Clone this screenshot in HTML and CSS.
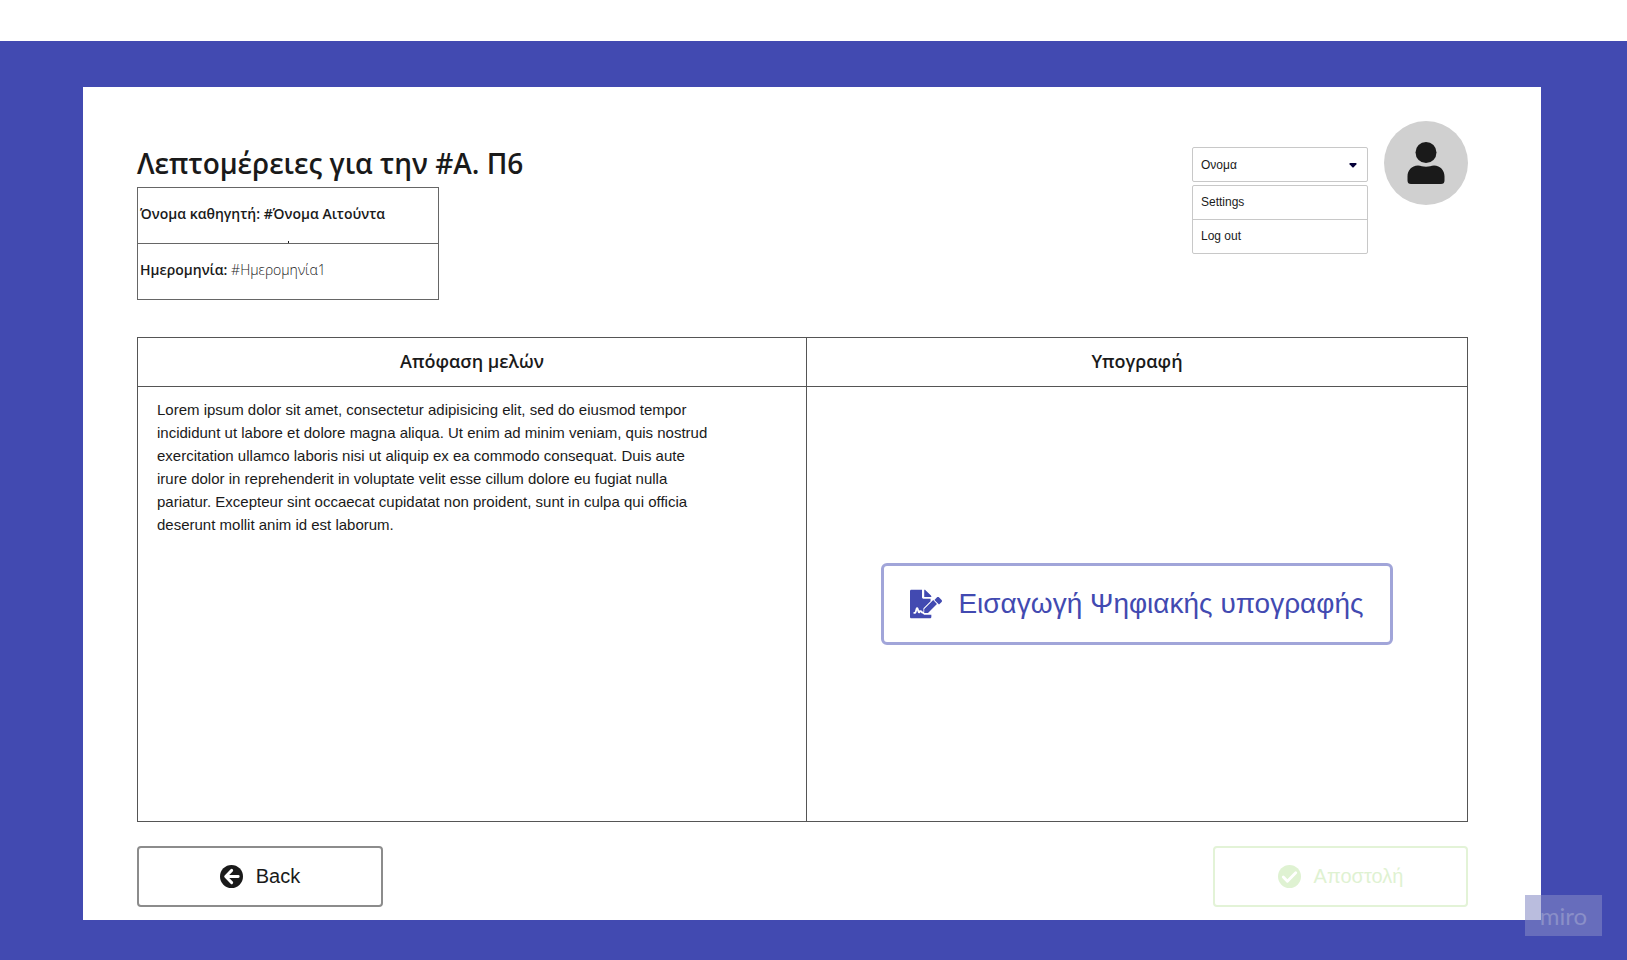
FILE: index.html
```html
<!DOCTYPE html>
<html lang="el">
<head>
<meta charset="utf-8">
<meta name="viewport" content="width=device-width, initial-scale=1">
<title>Λεπτομέρειες</title>
<link rel="stylesheet" href="styles.css">
</head>
<body>
<div class="stage">
  <main class="card">
    <header class="top">
      <div class="summary">
        <h1 class="title">Λεπτομέρειες για την #Α. Π6</h1>
        <table class="info">
          <tr><td class="strong mark">Όνομα καθηγητή: #Όνομα Αιτούντα</td></tr>
          <tr><td><span class="strong">Ημερομηνία:</span> <span class="light">#Ημερομηνία1</span></td></tr>
        </table>
      </div>
      <div class="account">
        <div class="account-menu">
          <div class="picker">
            <select class="picker-select" aria-label="Λογαριασμός"><option>Ονομα</option></select>
            <svg class="picker-caret" viewBox="0 0 8 5" aria-hidden="true"><path d="M1 0h6q1 .4.4 1.2L4.7 4.3q-.7.6-1.4 0L.6 1.2Q0 .4 1 0z"/></svg>
          </div>
          <nav class="menu">
            <a href="#settings">Settings</a>
            <a href="#logout">Log out</a>
          </nav>
        </div>
        <div class="avatar">
          <svg viewBox="0 0 38 42" aria-hidden="true"><circle cx="19" cy="10.500" r="10.500"/><path d="M11 23.500c3 0 4.500 1.300 8 1.300s5-1.300 8-1.300c6.500 0 10.500 5 10.500 11v4q0 3.500-3.500 3.500H4Q.5 42 .5 38.500v-4c0-6 4-11 10.500-11z"/></svg>
        </div>
      </div>
    </header>

    <table class="decision">
      <thead>
        <tr><th class="col-decision" scope="col">Απόφαση μελών</th><th scope="col">Υπογραφή</th></tr>
      </thead>
      <tbody>
        <tr>
          <td class="text-cell"><p class="text">Lorem ipsum dolor sit amet, consectetur adipisicing elit, sed do eiusmod tempor incididunt ut labore et dolore magna aliqua. Ut enim ad minim veniam, quis nostrud exercitation ullamco laboris nisi ut aliquip ex ea commodo consequat. Duis aute irure dolor in reprehenderit in voluptate velit esse cillum dolore eu fugiat nulla pariatur. Excepteur sint occaecat cupidatat non proident, sunt in culpa qui officia deserunt mollit anim id est laborum.</p></td>
          <td class="sign-cell">
            <button class="btn btn-sign" type="button">
              <svg viewBox="0 0 576 512" aria-hidden="true"><path d="M218 424c-8 0-14-4-18-11-6-11-13-10-18-1-5 8-12 13-21 12-9 0-16-6-19-14l-14-42-11 36c-5 17-20 28-38 28H64v-32h15c4 0 7-2 8-6l18-61c3-10 12-17 23-17s20 7 23 17l14 42c17-13 46-10 57 11 5 9 12 13 20 14v-66l128-127V160H240c-13 0-24-11-24-24V0H24C11 0 0 11 0 24v464c0 13 11 24 24 24h336c13 0 24-11 24-24v-40l-128 0zM384 122c0-6-3-12-7-17L279 7c-4-4-10-7-17-7h-6v128h128v-6zM256 347v69h68l161-162-67-68-162 161zm313-164-48-48c-9-9-25-9-34 0l-47 48 82 82 47-47c9-10 9-25 0-35z"/></svg>
              <span>Εισαγωγή Ψηφιακής υπογραφής</span>
            </button>
          </td>
        </tr>
      </tbody>
    </table>

    <footer class="actions">
      <button class="btn btn-back" type="button">
        <svg viewBox="0 0 24 24" aria-hidden="true"><circle cx="12" cy="12" r="12"/><path class="glyph" d="M12.200 5.600 5.900 12l6.300 6.400M6.500 12H19"/></svg>
        <span>Back</span>
      </button>
      <button class="btn btn-send" type="button">
        <svg viewBox="0 0 24 24" aria-hidden="true"><circle cx="12" cy="12" r="12"/><path class="glyph" d="m5.500 12.600 4.300 4.300 8.700-8.700"/></svg>
        <span>Αποστολή</span>
      </button>
    </footer>
  </main>
  <div class="watermark">miro</div>
</div>
</body>
</html>
```
FILE: styles.css
```css
* {
  box-sizing: border-box;
}

body {
  margin: 0;
  padding-top: 41px;
  background: #fff;
  color: #1a1a1a;
  font-family: "Liberation Sans", sans-serif;
}

.stage {
  position: relative;
  display: flex;
  min-height: calc(100vh - 41px);
  padding: 46px 86px 41px 83px;
  background: #424ab1;
}

.card {
  flex: 1;
  padding: 34px 73px 13px 54px;
  background: #fff;
}

.top {
  display: flex;
  justify-content: space-between;
  align-items: flex-start;
}

.summary {
  padding-top: 22px;
}

.title {
  margin: 0;
  font: 600 28px/40px "Open Sans", "Noto Sans", sans-serif;
}

.info {
  width: 302px;
  margin-top: 4px;
  border-collapse: collapse;
  font: 14px/20px "Open Sans", "Noto Sans", sans-serif;
}

.info td {
  height: 56px;
  padding: 0 2px 4px;
  border: 1px solid #666;
}

.strong {
  font-weight: 600;
}

.light {
  font-weight: 300;
}

.mark {
  position: relative;
}

.mark::after {
  content: "";
  position: absolute;
  bottom: 0;
  left: 50%;
  width: 1px;
  height: 2px;
  background: #1a1a1a;
}

.account {
  display: flex;
  gap: 16px;
}

.account-menu {
  display: flex;
  flex-direction: column;
  gap: 3px;
  width: 176px;
  padding-top: 26px;
  font-size: 12px;
}

.picker {
  position: relative;
}

.picker-select {
  display: block;
  width: 100%;
  height: 35px;
  padding: 0 8px;
  border: 1px solid #c8c8c8;
  border-radius: 2px;
  background: #fff;
  color: #1a1a1a;
  font: inherit;
  appearance: none;
}

.picker-caret {
  position: absolute;
  top: 16px;
  right: 11px;
  width: 8px;
  height: 5px;
  fill: #050038;
}

.menu {
  border: 1px solid #c8c8c8;
  border-radius: 2px;
}

.menu a {
  display: block;
  padding: 0 8px;
  color: #1a1a1a;
  line-height: 33px;
  text-decoration: none;
}

.menu a + a {
  border-top: 1px solid #c8c8c8;
}

.avatar {
  display: flex;
  align-items: center;
  justify-content: center;
  width: 84px;
  height: 84px;
  border-radius: 50%;
  background: #d0d0d0;
}

.avatar svg {
  width: 38px;
  height: 42px;
  fill: #1a1a1a;
}

.decision {
  width: 100%;
  margin-top: 37px;
  border-collapse: collapse;
  table-layout: fixed;
}

.decision th,
.decision td {
  border: 1px solid #555;
}

.decision th {
  height: 49px;
  padding: 0 0 2px;
  font: 600 18px/24px "Open Sans", "Noto Sans", sans-serif;
}

.decision td {
  height: 435px;
}

.col-decision {
  width: 50.3%;
}

.text-cell {
  padding: 11px 88px 11px 19px;
  vertical-align: top;
}

.text {
  margin: 0;
  font-size: 15px;
  line-height: 23px;
}

.sign-cell {
  padding: 0;
  text-align: center;
}

.btn {
  display: inline-flex;
  align-items: center;
  justify-content: center;
  border: 2px solid;
  border-radius: 4px;
  background: #fff;
  font-family: inherit;
  font-size: 20px;
}

.btn svg {
  width: 23px;
  height: 23px;
  fill: currentColor;
}

.glyph {
  fill: none;
  stroke: #fff;
  stroke-width: 3;
  stroke-linecap: round;
  stroke-linejoin: round;
}

.btn-sign {
  gap: 16px;
  width: 512px;
  height: 82px;
  border: 3px solid #a1a5d9;
  border-radius: 6px;
  color: #424ab1;
  font-size: 28px;
}

.btn-sign svg {
  width: 32px;
  height: 30px;
}

.actions {
  display: flex;
  justify-content: space-between;
  margin-top: 24px;
}

.btn-back,
.btn-send {
  gap: 13px;
  height: 61px;
}

.btn-back {
  width: 246px;
  border-color: #8c8c8c;
  color: #1a1a1a;
}

.btn-send {
  width: 255px;
  border-color: #e3f3d7;
  color: #dff2d2;
}

.watermark {
  position: absolute;
  right: 25px;
  bottom: 25px;
  width: 77px;
  background: rgba(132, 137, 196, 0.56);
  color: #8a8fc8;
  font: 24px/41px Lato, sans-serif;
  text-align: center;
}
```
